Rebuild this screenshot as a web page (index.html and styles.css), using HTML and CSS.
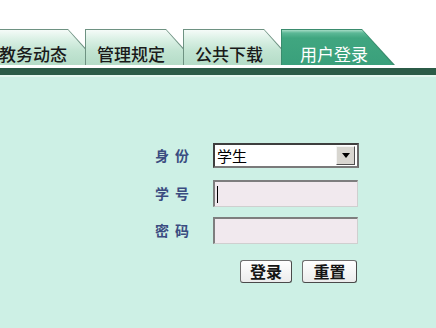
FILE: index.html
```html
<!DOCTYPE html>
<html lang="zh">
<head>
<meta charset="utf-8">
<link rel="stylesheet" href="styles.css">
</head>
<body>
<div class="page">
  <nav class="tabs">
    <div class="tab first"><span class="tab-face">教务动态</span></div>
    <div class="tab"><span class="tab-face">管理规定</span></div>
    <div class="tab"><span class="tab-face">公共下载</span></div>
    <div class="tab active"><span class="tab-face">用户登录</span></div>
  </nav>
  <div class="bar"></div>
  <div class="bar-light"></div>
  <main class="content">
    <form class="login">
      <div class="row row-select">
        <label class="lbl">身份</label>
        <div class="select">
          <span class="select-text">学生</span>
          <span class="select-btn"><span class="arrow"></span></span>
        </div>
      </div>
      <div class="row row-input">
        <label class="lbl">学号</label>
        <div class="input"><span class="caret"></span></div>
      </div>
      <div class="row row-input">
        <label class="lbl">密码</label>
        <div class="input"></div>
      </div>
      <div class="actions">
        <button type="button" class="btn btn-login">登录</button>
        <button type="button" class="btn btn-reset">重置</button>
      </div>
    </form>
  </main>
</div>
</body>
</html>
```
FILE: styles.css
```css
* { box-sizing: border-box; }
html, body { margin: 0; padding: 0; }
body {
  width: 436px;
  height: 328px;
  overflow: hidden;
  background: #ffffff;
  font-family: "Noto Sans CJK SC", "Noto Sans", sans-serif;
}
.page { display: flex; flex-direction: column; height: 328px; }

.tabs {
  display: flex;
  align-items: flex-end;
  padding-top: 29px;
  height: 65px;
  margin-bottom: 3px;
}
.tab {
  flex: none;
  width: 114px;
  height: 36px;
  margin-right: -16px;
  padding: 1px 1px 0 1px;
  background: #6e9282;
  clip-path: polygon(0 0, 81px 0, 114px 36px, 0 36px);
}
.tab.first { margin-left: -13px; }
.tab-face {
  display: block;
  height: 35px;
  padding: 13px 0 0 11px;
  font-size: 17px;
  font-weight: 500;
  line-height: 22px;
  color: #1a1a1a;
  white-space: nowrap;
  background: linear-gradient(#f5fbf8 0, #dcf1e6 25%, #c2e4d2 60%, #b4dcc7 100%);
  clip-path: polygon(0 0, 80px 0, 111px 35px, 0 35px);
}
.tab.active { background: #3a8c6e; }
.tab.active .tab-face {
  padding-left: 18px;
  color: #ffffff;
  font-weight: 400;
  background: linear-gradient(#a6dcc6 0, #5cb896 3px, #40a680 8px, #3aa07b 100%);
}

.bar { height: 7px; background: #2b5b47; flex: none; }
.bar-light { height: 2px; background: #e3f7ef; flex: none; }

.content {
  flex: 1;
  background: #cdf0e5;
  padding: 66px 0 0 155px;
}
.login { display: flex; flex-direction: column; width: 204px; }
.row { display: flex; align-items: center; }
.row-select { height: 25px; margin-bottom: 12px; }
.row-input { height: 27px; margin-bottom: 10px; }
.row-input + .row-input { margin-bottom: 16px; }
.lbl {
  width: 58px;
  flex: none;
  font-size: 14px;
  line-height: 17px;
  font-weight: 700;
  letter-spacing: 6px;
  color: #3a4c80;
}
.select {
  width: 146px;
  height: 25px;
  display: flex;
  align-items: center;
  justify-content: space-between;
  background: #ffffff;
  border-style: solid;
  border-width: 2px;
  border-color: #3e3e3e #6a6a6a #7a7a7a #3e3e3e;
  padding: 0 2px 0 2px;
}
.select-text { font-size: 15px; line-height: 18px; color: #000; }
.select-btn {
  width: 19px;
  height: 19px;
  display: flex;
  align-items: center;
  justify-content: center;
  background: #d8d6d0;
  border: 1px solid;
  border-color: #f4f4f4 #505050 #505050 #f4f4f4;
}
.arrow {
  width: 0; height: 0;
  border-left: 4px solid transparent;
  border-right: 4px solid transparent;
  border-top: 5px solid #000;
}
.input {
  width: 145px;
  height: 27px;
  display: flex;
  align-items: center;
  padding-left: 2px;
  background: #f1e9ee;
  border-style: solid;
  border-width: 2px 1px 1px 2px;
  border-color: #7e7e7e #cfcfcf #cfcfcf #7e7e7e;
}
.caret { width: 1px; height: 17px; background: #000; }
.actions {
  display: flex;
  justify-content: flex-end;
  gap: 10px;
  padding-right: 2px;
}
.btn {
  height: 23px;
  padding: 0;
  font-family: "Noto Sans CJK SC", sans-serif;
  font-size: 16px;
  font-weight: 700;
  line-height: 19px;
  color: #151515;
  background: linear-gradient(#ffffff, #ececec);
  border: 1px solid #6f6f6f;
  border-right-color: #4a4a4a;
  border-bottom-color: #4a4a4a;
  border-radius: 3px;
}
.btn-login { width: 52px; }
.btn-reset { width: 55px; }
```
